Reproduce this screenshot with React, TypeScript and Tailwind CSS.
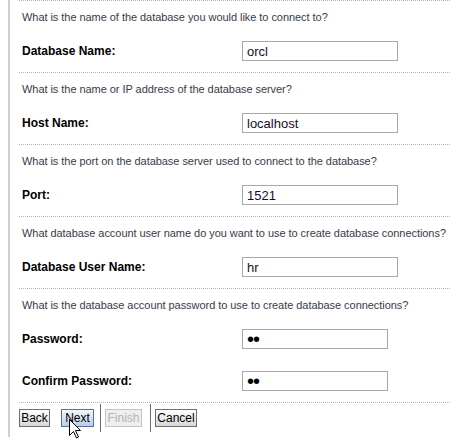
const sections = [
  {
    q: "What is the name of the database you would like to connect to?",
    fields: [{ label: "Database Name:", value: "orcl" }],
  },
  {
    q: "What is the name or IP address of the database server?",
    fields: [{ label: "Host Name:", value: "localhost" }],
  },
  {
    q: "What is the port on the database server used to connect to the database?",
    fields: [{ label: "Port:", value: "1521" }],
  },
  {
    q: "What database account user name do you want to use to create database connections?",
    fields: [{ label: "Database User Name:", value: "hr" }],
  },
  {
    q: "What is the database account password to use to create database connections?",
    fields: [
      { label: "Password:", value: "••", secret: true },
      { label: "Confirm Password:", value: "••", secret: true },
    ],
  },
];

function Field({ label, value, secret }: { label: string; value: string; secret?: boolean }) {
  return (
    <div className="flex items-center h-[20px]">
      <div className="w-[223px] pl-[3px] text-[12px] font-bold text-black leading-none">{label}</div>
      <div
        className={`h-[20px] border border-[#a8a8a8] bg-white flex items-center pl-[4px] ${
          secret ? "w-[146px]" : "w-[156px]"
        }`}
      >
        <span
          className={
            secret
              ? "text-[20px] leading-none text-black tracking-[-1px] -mt-[1px]"
              : "text-[13px] leading-none text-[#1a0a2a]"
          }
        >
          {value}
        </span>
      </div>
    </div>
  );
}

function Btn({ children, w, variant }: { children: string; w: string; variant?: "hover" | "disabled" }) {
  const base = `${w} h-[18px] text-[12px] leading-none border flex items-center justify-center`;
  if (variant === "hover")
    return (
      <div className={`${base} border-[#5c6f99] bg-gradient-to-b from-[#f4f8fc] to-[#b9cbe6] text-black`}>
        {children}
      </div>
    );
  if (variant === "disabled")
    return (
      <div className={`${base} border-[#c4c4c4] bg-[#eeeeec] text-[#b4b4b4]`}>{children}</div>
    );
  return (
    <div className={`${base} border-[#6f6f6f] bg-gradient-to-b from-[#ffffff] to-[#d6d6d2] text-black`}>
      {children}
    </div>
  );
}

export default function App() {
  return (
    <div
      className="relative w-[450px] h-[439px] bg-white overflow-hidden"
      style={{ fontFamily: '"Liberation Sans", Arial, sans-serif' }}
    >
      <div className="ml-[8px] h-[437px] border-l-2 border-[#c9cfdb] pl-[9px]">
        {sections.map((s, i) => (
          <div key={i} className="border-t border-dotted border-[#b4b4b4] pt-[10px] pb-[11px]">
            <div className="pl-[3px] h-[13px] text-[11px] leading-[13px] text-[#3a3a4a] whitespace-nowrap tracking-[-0.05px]">
              {s.q}
            </div>
            <div className="mt-[17px] flex flex-col gap-[22px]">
              {s.fields.map((f) => (
                <Field key={f.label} {...f} />
              ))}
            </div>
          </div>
        ))}
        <div className="border-t border-dotted border-[#b4b4b4] pt-[1px] flex items-center h-[30px]">
          <Btn w="w-[31px]">Back</Btn>
          <div className="ml-[11px]">
            <Btn w="w-[33px]" variant="hover">Next</Btn>
          </div>
          <div className="ml-[6px] mr-[4px] w-[1px] h-[28px] bg-[#6a6a6a]" />
          <Btn w="w-[37px]" variant="disabled">Finish</Btn>
          <div className="ml-[8px] mr-[4px] w-[1px] h-[28px] bg-[#6a6a6a]" />
          <Btn w="w-[42px]">Cancel</Btn>
        </div>
      </div>
      <svg className="absolute left-[69px] top-[419px]" width="13" height="20" viewBox="0 0 13 20">
        <path d="M0.5 0.5 L0.5 16.5 L4.5 12.5 L7.5 19 L9.5 18 L6.5 11.5 L11.5 11.5 Z" fill="white" stroke="black" strokeWidth="1" />
      </svg>
    </div>
  );
}
